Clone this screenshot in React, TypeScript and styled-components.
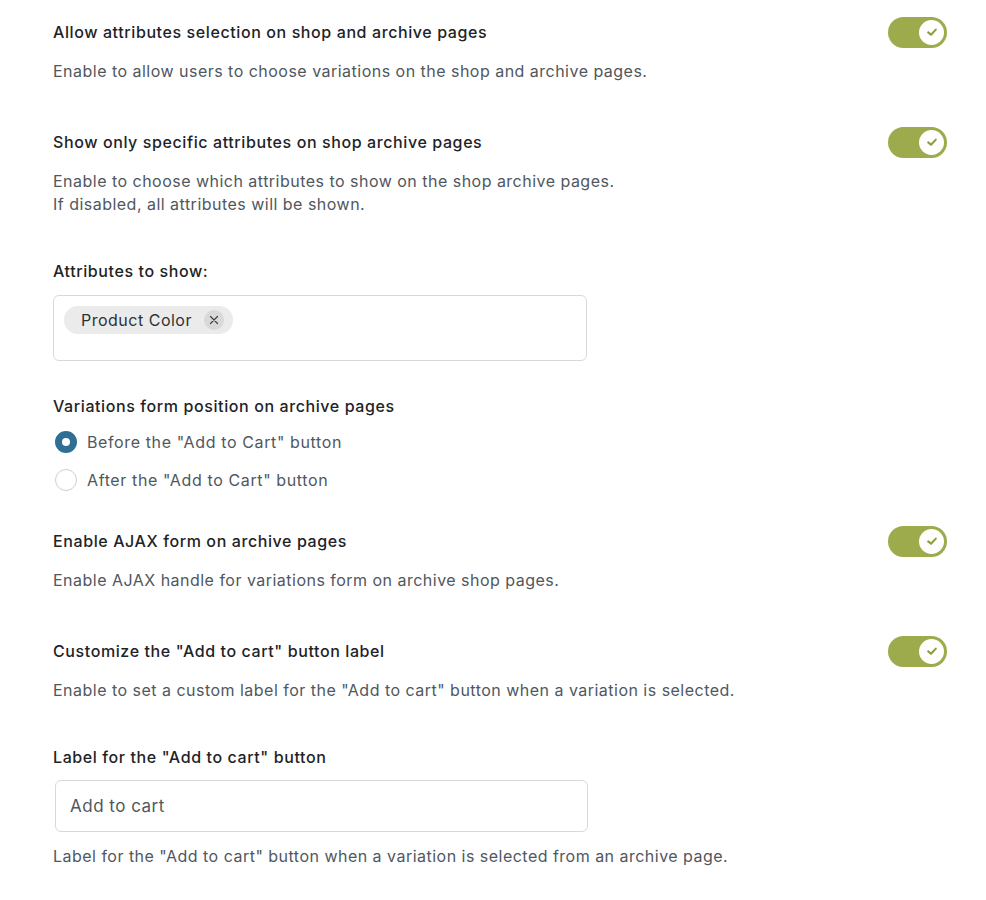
import React, { useState } from "react";
import styled, { createGlobalStyle } from "styled-components";

const GlobalStyle = createGlobalStyle`
  html, body { margin: 0; padding: 0; background: #ffffff; }
  body {
    font-family: Inter, "Noto Sans", "Liberation Sans", sans-serif;
    -webkit-font-smoothing: antialiased;
  }
`;

const Page = styled.div`
  padding: 20px 39px 30px 53px;
  display: flex;
  flex-direction: column;
`;

const Section = styled.section<{ $gap?: number }>`
  display: flex;
  flex-direction: column;
  margin-bottom: ${(p) => p.$gap ?? 47}px;
`;

const TitleRow = styled.div`
  display: flex;
  align-items: center;
  justify-content: space-between;
  height: 24px;
`;

const Title = styled.h3`
  margin: 0;
  font-size: 16px;
  line-height: 24px;
  font-weight: 500;
  color: #1e2327;
  letter-spacing: 0.6px;
`;

const Desc = styled.p<{ $top?: number }>`
  margin: ${(p) => p.$top ?? 16}px 0 0;
  font-size: 16px;
  line-height: 23px;
  font-weight: 400;
  color: #50575e;
  letter-spacing: 0.48px;
`;

const ToggleTrack = styled.button<{ $on: boolean }>`
  width: 59px;
  height: 31px;
  border-radius: 16px;
  border: none;
  padding: 3px;
  background: ${(p) => (p.$on ? "#9dab4c" : "#c9c9c9")};
  display: flex;
  justify-content: ${(p) => (p.$on ? "flex-end" : "flex-start")};
  align-items: center;
  cursor: pointer;
  flex-shrink: 0;
`;

const ToggleKnob = styled.span`
  width: 25px;
  height: 25px;
  border-radius: 50%;
  background: #ffffff;
  display: flex;
  align-items: center;
  justify-content: center;
`;

const Toggle = ({ on, onClick }: { on: boolean; onClick: () => void }) => (
  <ToggleTrack $on={on} onClick={onClick} aria-pressed={on}>
    <ToggleKnob>
      {on && (
        <svg width="14" height="14" viewBox="0 0 14 14">
          <path
            d="M3.2 7.4 L6 9.8 L10.8 4.6"
            fill="none"
            stroke="#8f9d3f"
            strokeWidth="2.1"
            strokeLinecap="round"
            strokeLinejoin="round"
          />
        </svg>
      )}
    </ToggleKnob>
  </ToggleTrack>
);

const SelectBox = styled.div`
  margin-top: 12px;
  width: 534px;
  height: 66px;
  box-sizing: border-box;
  border: 1px solid #d8d8d8;
  border-radius: 6px;
  padding: 10px 10px;
  display: flex;
  align-items: flex-start;
`;

const Chip = styled.span`
  display: inline-flex;
  align-items: center;
  height: 28px;
  border-radius: 14px;
  background: #ebebeb;
  padding: 0 9px 0 17px;
  gap: 12px;
  font-size: 16px;
  letter-spacing: 0.5px;
  color: #2c3338;
`;

const ChipRemove = styled.span`
  width: 20px;
  height: 20px;
  border-radius: 50%;
  background: #d9d9d9;
  display: flex;
  align-items: center;
  justify-content: center;
`;

const RadioList = styled.div`
  margin-top: 12px;
  display: flex;
  flex-direction: column;
  gap: 14px;
`;

const RadioRow = styled.label`
  display: flex;
  align-items: center;
  gap: 10px;
  height: 24px;
  padding-left: 2px;
  font-size: 16px;
  letter-spacing: 0.62px;
  color: #50575e;
  cursor: pointer;
`;

const RadioDot = styled.span<{ $checked: boolean }>`
  width: 22px;
  height: 22px;
  box-sizing: border-box;
  border-radius: 50%;
  background: #ffffff;
  border: ${(p) => (p.$checked ? "7px solid #2e6f93" : "1px solid #cfcfcf")};
  flex-shrink: 0;
`;

const TextInput = styled.input`
  margin-top: 11px;
  margin-left: 2px;
  width: 533px;
  height: 52px;
  box-sizing: border-box;
  border: 1px solid #d8d8d8;
  border-radius: 6px;
  padding: 0 14px;
  font-family: inherit;
  font-size: 17px;
  letter-spacing: 0.5px;
  color: #50575e;
  outline: none;
`;

export default function App() {
  const [t, setT] = useState([true, true, true, true]);
  const [pos, setPos] = useState<"before" | "after">("before");
  const flip = (i: number) => setT((s) => s.map((v, j) => (j === i ? !v : v)));

  return (
    <>
      <GlobalStyle />
      <Page>
        <Section>
          <TitleRow>
            <Title>Allow attributes selection on shop and archive pages</Title>
            <Toggle on={t[0]} onClick={() => flip(0)} />
          </TitleRow>
          <Desc>Enable to allow users to choose variations on the shop and archive pages.</Desc>
        </Section>

        <Section $gap={43}>
          <TitleRow>
            <Title>Show only specific attributes on shop archive pages</Title>
            <Toggle on={t[1]} onClick={() => flip(1)} />
          </TitleRow>
          <Desc>
            Enable to choose which attributes to show on the shop archive pages.
            <br />
            If disabled, all attributes will be shown.
          </Desc>
        </Section>

        <Section $gap={33}>
          <Title>Attributes to show:</Title>
          <SelectBox>
            <Chip>
              Product Color
              <ChipRemove>
                <svg width="10" height="10" viewBox="0 0 10 10">
                  <path d="M1.5 1.5 L8.5 8.5 M8.5 1.5 L1.5 8.5" stroke="#3c434a" strokeWidth="1.2" strokeLinecap="round" />
                </svg>
              </ChipRemove>
            </Chip>
          </SelectBox>
        </Section>

        <Section $gap={37}>
          <Title>Variations form position on archive pages</Title>
          <RadioList>
            <RadioRow onClick={() => setPos("before")}>
              <RadioDot $checked={pos === "before"} />
              Before the "Add to Cart" button
            </RadioRow>
            <RadioRow onClick={() => setPos("after")}>
              <RadioDot $checked={pos === "after"} />
              After the "Add to Cart" button
            </RadioRow>
          </RadioList>
        </Section>

        <Section>
          <TitleRow>
            <Title>Enable AJAX form on archive pages</Title>
            <Toggle on={t[2]} onClick={() => flip(2)} />
          </TitleRow>
          <Desc>Enable AJAX handle for variations form on archive shop pages.</Desc>
        </Section>

        <Section $gap={42.5}>
          <TitleRow>
            <Title>Customize the "Add to cart" button label</Title>
            <Toggle on={t[3]} onClick={() => flip(3)} />
          </TitleRow>
          <Desc>Enable to set a custom label for the "Add to cart" button when a variation is selected.</Desc>
        </Section>

        <Section $gap={0}>
          <Title>Label for the "Add to cart" button</Title>
          <TextInput defaultValue="Add to cart" />
          <Desc $top={13.5}>Label for the "Add to cart" button when a variation is selected from an archive page.</Desc>
        </Section>
      </Page>
    </>
  );
}
